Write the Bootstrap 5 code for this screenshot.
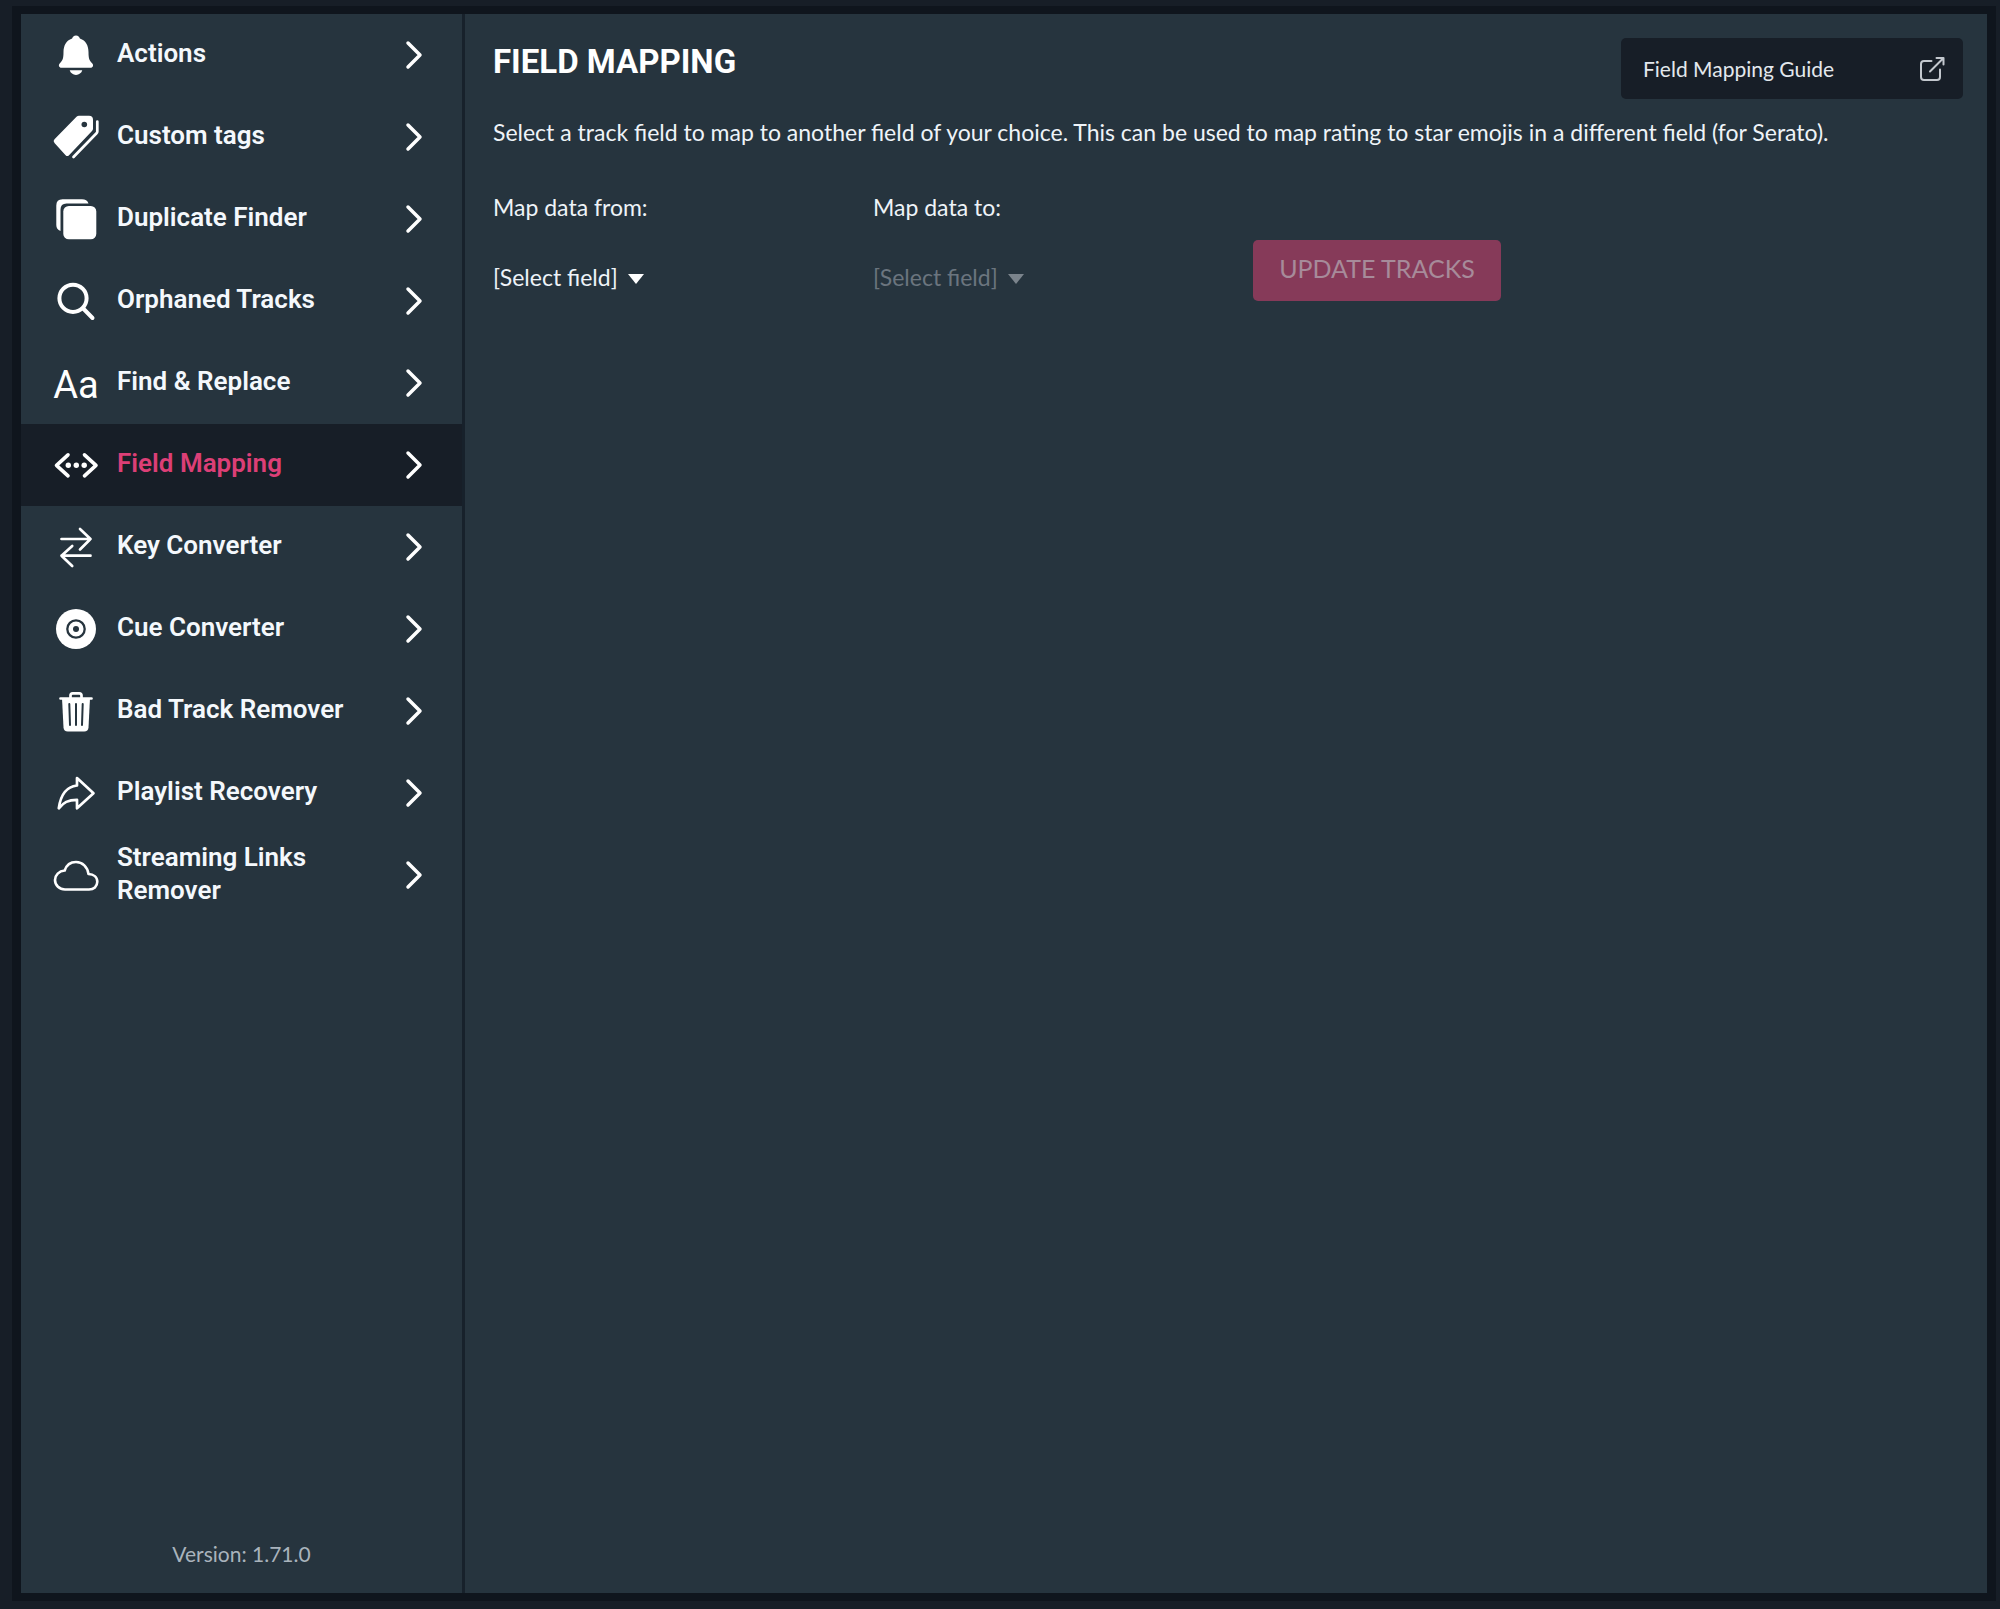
<!DOCTYPE html>
<html lang="en">
<head>
<meta charset="utf-8">
<meta name="viewport" content="width=device-width, initial-scale=1">
<title>Field Mapping</title>
<link href="https://cdn.jsdelivr.net/npm/bootstrap@5.3.0/dist/css/bootstrap.min.css" rel="stylesheet">
<style>
:root { --ink: #171e27; --panel: #26343e; --frame: #0f151d; --accent: #dc3f76; }
body { background: var(--ink); color: #eef3f8; font: 23px/36px Lato, sans-serif; padding: 6px 4px 8px 12px; }
.app-frame { border: solid var(--frame); border-width: 8px 9px; background: var(--panel); }
.side-panel { width: 444px; border-right: 3px solid #17212b; }
.tool-link { min-height: 82px; padding: 0 38px 0 32px; gap: 18px; color: #f4f8fc; font: 600 26px/33px Roboto, sans-serif; text-decoration: none; }
.tool-link:hover { background: #1e2832; }
.tool-link.active { background: var(--ink); }
.tool-link.active .tool-name { color: var(--accent); }
.tool-name { padding-bottom: 3px; }
.tool-icon { width: 46px; height: 46px; flex: none; fill: #fff; stroke: none; overflow: visible; }
.tool-icon .ln { fill: none; stroke: #fff; stroke-linecap: round; stroke-linejoin: round; }
.tool-icon .cut { fill: var(--panel); }
.tool-icon .cutln { fill: none; stroke: var(--panel); stroke-linecap: round; }
.tool-icon text { font: 400 38px Roboto, sans-serif; }
.chev { width: 20px; height: 32px; flex: none; fill: none; stroke: #fff; stroke-width: 3.5; stroke-linecap: round; stroke-linejoin: round; }
.version { color: #a9b3bc; font-size: 21px; padding-bottom: 21px; }
.main-panel { padding: 24px 24px 24px 28px; }
.page-title { font: 700 33px/48px Roboto, sans-serif; color: #fff; margin: 0; }
.guide-link { width: 342px; height: 61px; padding: 0 18px 0 22px; background: var(--ink); color: #e3e8ed; border-radius: 5px; font-size: 21px; text-decoration: none; }
.guide-link svg { width: 26px; height: 26px; fill: none; stroke: #c3c8ce; stroke-width: 2; stroke-linecap: round; stroke-linejoin: round; }
.intro { margin: 15px 0 39px; }
.map-col { width: 380px; }
.map-col label { margin-bottom: 34px; }
.picker { display: grid; width: 152px; }
.picker > * { grid-area: 1 / 1; }
.picker select { appearance: none; background: none; border: 0; padding: 0; color: inherit; font: inherit; opacity: 1; }
.picker svg { width: 18px; height: 11px; margin-top: 4px; justify-self: end; align-self: center; fill: #fff; pointer-events: none; }
.picker.off { color: #6b757e; }
.picker.off svg { fill: #7b848c; }
.update-btn, .update-btn:disabled { width: 248px; height: 61px; margin-top: 51px; padding: 0 0 3px; border: 0; border-radius: 5px; background: #863a59; color: #a78b9a; font-size: 25px; opacity: 1; }
</style>
<script src="https://cdn.jsdelivr.net/npm/bootstrap@5.3.0/dist/js/bootstrap.bundle.min.js"></script>
</head>
<body class="d-flex min-vh-100">
<div class="app-frame d-flex flex-grow-1">
  <aside class="side-panel d-flex flex-column flex-shrink-0">
    <nav class="d-flex flex-column" aria-label="Tools">
      <a class="tool-link d-flex align-items-center" href="#actions">
        <svg class="tool-icon" viewBox="-23 -23 46 46" aria-hidden="true"><path d="M0-19.500c2.200 0 3.500 1.500 3.900 3C10-14.500 12.500-9 12.500-3c0 7 1 8.500 3.600 11.200C18 10.200 17 12.700 14.500 12.700h-29C-17 12.700-18 10.200-16.100 8.200-13.500 5.500-12.500 4-12.500-3c0-6 2.500-11.500 8.600-13.500.4-1.500 1.700-3 3.900-3zM-6.300 15.300H6.300C5.500 18 3 20 0 20s-5.500-2-6.300-4.700z"/></svg>
        <span class="tool-name flex-grow-1">Actions</span>
        <svg class="chev" viewBox="-10 -16 20 32" aria-hidden="true"><path d="M-6-12 6 0-6 12"/></svg></a>
      <a class="tool-link d-flex align-items-center" href="#tags">
        <svg class="tool-icon" viewBox="-23 -23 46 46" aria-hidden="true"><path d="M3-21.200H13q4 0 4 4V-8.500q0 1.500-1 2.500L-7 18.200q-1.700 1.700-3.400 0L-21.500 6q-1.800-2 0-3.800L.5-20.200q1-1 2.500-1z"/><circle class="cut" cx="8.300" cy="-12.500" r="2.800"/><path class="ln" stroke-width="2.700" d="M21.300-15.500V-5.500q0 1-.8 1.800L-2.500 20"/></svg>
        <span class="tool-name flex-grow-1">Custom tags</span>
        <svg class="chev" viewBox="-10 -16 20 32" aria-hidden="true"><path d="M-6-12 6 0-6 12"/></svg></a>
      <a class="tool-link d-flex align-items-center" href="#duplicates">
        <svg class="tool-icon" viewBox="-23 -23 46 46" aria-hidden="true"><path d="M12.500-15.500H-9.500q-6 0-6 6V12q-4.200-1.500-4.200-6V-13.500q0-6.200 6.200-6.200H6q5 0 6.500 4.200z"/><rect x="-12.700" y="-13" width="33" height="33.300" rx="5.500"/></svg>
        <span class="tool-name flex-grow-1">Duplicate Finder</span>
        <svg class="chev" viewBox="-10 -16 20 32" aria-hidden="true"><path d="M-6-12 6 0-6 12"/></svg></a>
      <a class="tool-link d-flex align-items-center" href="#orphaned">
        <svg class="tool-icon" viewBox="-23 -23 46 46" aria-hidden="true"><g class="ln" stroke-width="4"><circle cx="-3" cy="-2.700" r="13.600"/><path d="M7.200 7.500 16.500 17"/></g></svg>
        <span class="tool-name flex-grow-1">Orphaned Tracks</span>
        <svg class="chev" viewBox="-10 -16 20 32" aria-hidden="true"><path d="M-6-12 6 0-6 12"/></svg></a>
      <a class="tool-link d-flex align-items-center" href="#replace">
        <svg class="tool-icon" viewBox="-23 -23 46 46" aria-hidden="true"><text y="15" text-anchor="middle">Aa</text></svg>
        <span class="tool-name flex-grow-1">Find &amp; Replace</span>
        <svg class="chev" viewBox="-10 -16 20 32" aria-hidden="true"><path d="M-6-12 6 0-6 12"/></svg></a>
      <a class="tool-link active d-flex align-items-center" href="#mapping" aria-current="page">
        <svg class="tool-icon" viewBox="-23 -23 46 46" aria-hidden="true"><path class="ln" stroke-width="3.600" d="M-8-10.200-19.500.3-8 10.800M8.500-10.200 20 .3 8.500 10.800"/><circle cx="-7.700" cy=".3" r="2.700"/><circle cx=".3" cy=".3" r="2.700"/><circle cx="8.200" cy=".3" r="2.700"/></svg>
        <span class="tool-name flex-grow-1">Field Mapping</span>
        <svg class="chev" viewBox="-10 -16 20 32" aria-hidden="true"><path d="M-6-12 6 0-6 12"/></svg></a>
      <a class="tool-link d-flex align-items-center" href="#keys">
        <svg class="tool-icon" viewBox="-23 -23 46 46" aria-hidden="true"><path class="ln" stroke-width="2.700" d="M-14.500-8H14.500M4-18 14.500-8 4 2.500M14.500 8.700H-14.500M-3.800-1-14.500 8.700-3.800 19"/></svg>
        <span class="tool-name flex-grow-1">Key Converter</span>
        <svg class="chev" viewBox="-10 -16 20 32" aria-hidden="true"><path d="M-6-12 6 0-6 12"/></svg></a>
      <a class="tool-link d-flex align-items-center" href="#cues">
        <svg class="tool-icon" viewBox="-23 -23 46 46" aria-hidden="true"><circle r="20"/><circle class="cutln" stroke-width="2.300" r="8.700"/><circle class="cut" r="3"/></svg>
        <span class="tool-name flex-grow-1">Cue Converter</span>
        <svg class="chev" viewBox="-10 -16 20 32" aria-hidden="true"><path d="M-6-12 6 0-6 12"/></svg></a>
      <a class="tool-link d-flex align-items-center" href="#bad">
        <svg class="tool-icon" viewBox="-23 -23 46 46" aria-hidden="true"><path d="M-14-13H14L12.500 16.500q-.3 4-4.300 4H-8.200q-4 0-4.300-4z"/><path class="ln" stroke-width="2.700" d="M-15.500-12.500h31M-5.500-13v-2.500q0-2.200 2.200-2.200h6.600q2.200 0 2.200 2.200v2.500"/><path class="cutln" stroke-width="2" d="M-6.700-7-6 14M0-7V14M6.700-7 6 14"/></svg>
        <span class="tool-name flex-grow-1">Bad Track Remover</span>
        <svg class="chev" viewBox="-10 -16 20 32" aria-hidden="true"><path d="M-6-12 6 0-6 12"/></svg></a>
      <a class="tool-link d-flex align-items-center" href="#playlists">
        <svg class="tool-icon" viewBox="-23 -23 46 46" aria-hidden="true"><path class="ln" stroke-width="2.700" d="M1-15 17.500.2 1 15.300V6.800C-8 6.800-12.500 9.500-17.200 15.300-15.500 2.500-10-6.300 1-7.500z"/></svg>
        <span class="tool-name flex-grow-1">Playlist Recovery</span>
        <svg class="chev" viewBox="-10 -16 20 32" aria-hidden="true"><path d="M-6-12 6 0-6 12"/></svg></a>
      <a class="tool-link d-flex align-items-center" href="#streaming">
        <svg class="tool-icon" viewBox="-23 -23 46 46" aria-hidden="true"><path class="ln" stroke-width="2.600" d="M12.500-1C11.500-8 6.500-13 0-13-5.500-13-9.700-9.500-11.300-4.500-17-4-21 0-21 5c0 5.500 4.500 9.500 10 9.500H13c4.700 0 8.300-3 8.300-7.700C21.300 2 17.500-.7 12.500-1z"/></svg>
        <span class="tool-name flex-grow-1">Streaming Links Remover</span>
        <svg class="chev" viewBox="-10 -16 20 32" aria-hidden="true"><path d="M-6-12 6 0-6 12"/></svg></a>
    </nav>
    <div class="version mt-auto text-center">Version: 1.71.0</div>
  </aside>
  <main class="main-panel flex-grow-1">
    <header class="d-flex justify-content-between align-items-start">
      <h1 class="page-title">FIELD MAPPING</h1>
      <a class="guide-link d-flex align-items-center justify-content-between" href="#guide">Field Mapping Guide
        <svg viewBox="0 0 26 26" aria-hidden="true"><path d="M12.500 5H5q-3 0-3 3V21q0 3 3 3H18q3 0 3-3V13.500M17.500 2H24.500V8.500M24 2.500 11 15.500"/></svg></a>
    </header>
    <p class="intro">Select a track field to map to another field of your choice. This can be used to map rating to star emojis in a different field (for Serato).</p>
    <form class="d-flex flex-wrap align-items-start">
      <div class="map-col">
        <label class="d-block" for="map-from">Map data from:</label>
        <div class="picker"><select id="map-from"><option>[Select field]</option></select><svg viewBox="0 0 18 11" aria-hidden="true"><path d="M1 0H17L9 10z"/></svg></div>
      </div>
      <div class="map-col">
        <label class="d-block" for="map-to">Map data to:</label>
        <div class="picker off"><select id="map-to" disabled><option>[Select field]</option></select><svg viewBox="0 0 18 11" aria-hidden="true"><path d="M1 0H17L9 10z"/></svg></div>
      </div>
      <button class="update-btn btn" type="button" disabled>UPDATE TRACKS</button>
    </form>
  </main>
</div>
</body>
</html>
